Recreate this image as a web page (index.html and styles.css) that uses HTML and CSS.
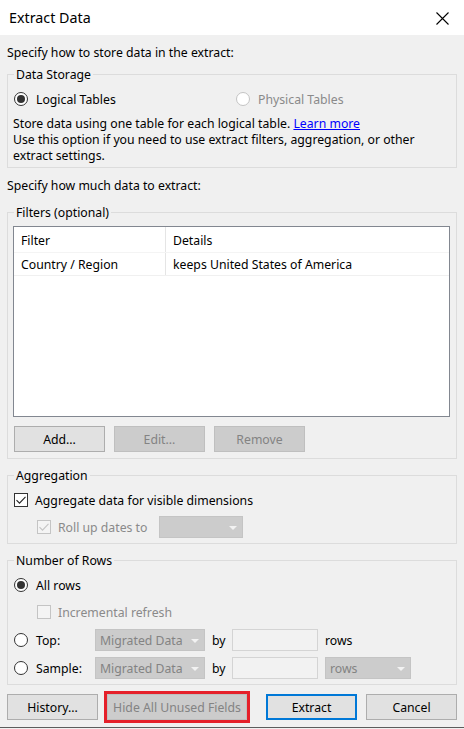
FILE: index.html
```html
<!DOCTYPE html>
<html>
<head>
<meta charset="utf-8">
<title>Extract Data</title>
<link rel="stylesheet" href="styles.css">
</head>
<body>
<div class="window">
  <div class="titlebar">
    <span class="title">Extract Data</span>
    <svg class="close" width="13" height="13" viewBox="0 0 13 13"><path d="M0.5 0.5L12.5 12.5M12.5 0.5L0.5 12.5" stroke="#000" stroke-width="1.1" fill="none"/></svg>
  </div>
  <div class="content">
    <p class="intro">Specify how to store data in the extract:</p>
    <fieldset class="group storage">
      <legend>Data Storage</legend>
      <div class="storage-row">
        <div class="opt"><span class="radio checked"></span><span class="lbl">Logical Tables</span></div>
        <div class="opt disabled"><span class="radio"></span><span class="lbl">Physical Tables</span></div>
      </div>
      <p class="desc">Store data using one table for each logical table. <a class="link">Learn more</a><br>Use this option if you need to use extract filters, aggregation, or other<br>extract settings.</p>
    </fieldset>

    <p class="intro second">Specify how much data to extract:</p>
    <fieldset class="group filters">
      <legend>Filters (optional)</legend>
      <div class="table">
        <div class="trow head">
          <div class="cell c1">Filter</div>
          <div class="cell c2">Details</div>
        </div>
        <div class="trow data">
          <div class="cell c1">Country / Region</div>
          <div class="cell c2">keeps United States of America</div>
        </div>
      </div>
      <div class="btn-row">
        <button class="btn">Add...</button>
        <button class="btn disabled">Edit...</button>
        <button class="btn disabled">Remove</button>
      </div>
    </fieldset>

    <fieldset class="group aggregation">
      <legend>Aggregation</legend>
      <div class="opt agg-row">
        <span class="check"><svg width="12" height="12" viewBox="0 0 12 12"><path d="M1.5 6.2L4.5 9.2L10.5 2.8" stroke="#222" stroke-width="1.1" fill="none"/></svg></span>
        <span class="lbl">Aggregate data for visible dimensions</span>
      </div>
      <div class="rollup-row">
        <div class="opt disabled">
          <span class="check dis"><svg width="12" height="12" viewBox="0 0 12 12"><path d="M1.5 6.2L4.5 9.2L10.5 2.8" stroke="#c4c4c4" stroke-width="1.1" fill="none"/></svg></span>
          <span class="lbl">Roll up dates to</span>
        </div>
        <div class="combo rollup-combo"></div>
      </div>
    </fieldset>

    <fieldset class="group rows">
      <legend>Number of Rows</legend>
      <div class="opt all-row"><span class="radio checked"></span><span class="lbl">All rows</span></div>
      <div class="opt disabled incr-row"><span class="check dis"></span><span class="lbl">Incremental refresh</span></div>
      <div class="limit-row top-row">
        <div class="opt"><span class="radio"></span><span class="lbl">Top:</span></div>
        <div class="combo">Migrated Data</div>
        <span class="by">by</span>
        <div class="textbox"></div>
        <span class="unit">rows</span>
      </div>
      <div class="limit-row sample-row">
        <div class="opt"><span class="radio"></span><span class="lbl">Sample:</span></div>
        <div class="combo">Migrated Data</div>
        <span class="by">by</span>
        <div class="textbox"></div>
        <div class="unit-wrap"><div class="combo unit-combo">rows</div></div>
      </div>
    </fieldset>

    <div class="footer">
      <button class="btn history">History...</button>
      <button class="btn disabled hide-btn">Hide All Unused Fields</button>
      <button class="btn default extract">Extract</button>
      <button class="btn cancel">Cancel</button>
    </div>
    <div class="edge"></div>
  </div>
</div>
</body>
</html>
```

FILE: styles.css
```css
* { box-sizing: border-box; }
html, body { margin: 0; padding: 0; }
body {
  font-family: "Noto Sans", "Segoe UI", sans-serif;
  font-size: 12.25px;
  line-height: 16px;
  color: #000;
  background: #f0f0f0;
  width: 464px;
  height: 729px;
  overflow: hidden;
}
.window { width: 464px; height: 729px; background: #f0f0f0; }

.titlebar {
  height: 35px;
  background: #fff;
  display: flex;
  align-items: flex-start;
  justify-content: space-between;
  padding: 0 15px 0 9px;
}
.title { font-size: 14.3px; line-height: 20px; margin-top: 8px; }
.close { display: block; margin-top: 12px; }

.content { padding: 0 7px; }

.intro { margin: 9px 0 0 0; height: 16px; padding-top: 1px; white-space: nowrap; }

.group {
  margin: 6px 0 0 0;
  padding: 0 6px 0 5px;
  border: 1px solid #dcdcdc;
  min-width: 0;
}
.group legend {
  padding: 1px 2px 0 2px;
  margin-left: 1px;
  line-height: 16px;
  height: 16px;
  white-space: nowrap;
}

.opt { display: flex; align-items: center; height: 16px; white-space: nowrap; }
.opt.disabled { color: #8a8a8a; }
.lbl { padding-top: 2px; line-height: 16px; }

.radio {
  width: 14px; height: 14px;
  border: 1px solid #333;
  border-radius: 50%;
  background: #fff;
  margin: 0 8px 0 1px;
  position: relative;
  flex: none;
}
.radio.checked::after {
  content: "";
  position: absolute;
  left: 2px; top: 2px;
  width: 8px; height: 8px;
  border-radius: 50%;
  background: #333;
}
.opt.disabled .radio { border-color: #c4c4c4; }

.check {
  width: 14px; height: 14px;
  border: 1px solid #333;
  background: #fff;
  margin: 0 7px 0 1px;
  flex: none;
  display: flex;
  align-items: center;
  justify-content: center;
}
.check.dis { border-color: #c4c4c4; background: #f4f4f4; }
.check svg { display: block; }

/* storage */
.storage { padding-bottom: 3px; }
.storage-row {
  display: grid;
  grid-template-columns: 222px auto;
  margin-top: 9px;
}
.desc { margin: 8px 0 0 0; padding-top: 1px; white-space: nowrap; }
.link { color: #0000ff; text-decoration: underline; }

/* filters */
.filters { margin-top: 11px; padding-bottom: 6px; }
.table {
  margin-top: 6px;
  height: 191px;
  border: 1px solid #828790;
  background: #fff;
}
.trow { display: flex; }
.trow.head { height: 26px; border-bottom: 1px solid #f4f4f4; }
.trow.data { height: 23px; border-bottom: 1px solid #f0f0f0; }
.cell { display: flex; align-items: center; padding: 2px 0 0 7px; white-space: nowrap; }
.cell.c1 { width: 152px; border-right: 1px solid #e5e5e5; }
.trow.head .cell { padding-top: 3px; }

.btn-row { display: flex; gap: 9px; margin: 9px 0 0 1px; }

.btn {
  font-family: inherit;
  font-size: 12.25px;
  color: #000;
  height: 26px;
  width: 91px;
  border: 1px solid #adadad;
  background: #e1e1e1;
  padding: 2px 0 0 0;
  margin: 0;
  line-height: 16px;
  white-space: nowrap;
}
.btn.disabled {
  background: #cccccc;
  border-color: #bfbfbf;
  color: #838383;
}
.btn.default { border: 2px solid #0078d7; }

/* aggregation */
.aggregation { margin-top: 8px; padding-bottom: 5px; }
.agg-row { margin-top: 9px; }
.rollup-row {
  display: grid;
  grid-template-columns: 123px 84px;
  align-items: center;
  margin: 8px 0 0 23px;
  height: 22px;
}
.combo {
  height: 22px;
  background: #cccccc;
  border: 1px solid #c4c4c4;
  color: #838383;
  padding: 2px 0 0 4px;
  display: flex;
  align-items: center;
  position: relative;
  white-space: nowrap;
}
.combo::after {
  content: "";
  position: absolute;
  right: 5px;
  top: 9px;
  border-left: 4px solid transparent;
  border-right: 4px solid transparent;
  border-top: 4px solid #f2f2f2;
}

/* rows */
.rows { margin-top: 8px; padding-bottom: 5px; }
.all-row { margin-top: 9px; }
.incr-row { margin: 11px 0 0 23px; }
.limit-row {
  display: grid;
  grid-template-columns: 82px 110px 27px 86px auto;
  align-items: center;
  height: 22px;
}
.top-row { margin-top: 9px; }
.sample-row { margin-top: 6px; }
.by, .unit { padding: 2px 0 0 7px; }
.unit-wrap { padding-left: 7px; }
.textbox {
  height: 22px;
  border: 1px solid #d4d4d4;
  background: #f2f2f2;
}
.unit-combo { width: 86px; }

/* footer */
.footer { display: flex; margin-top: 9px; }
.hide-btn {
  width: 140px;
  margin-left: 9px;
  outline: 3px solid #e5202a;
  outline-offset: 0;
}
.extract { margin-left: 19px; }
.cancel { margin-left: 9px; }

.edge {
  margin: 7px -7px 0 -7px;
  height: 1px;
  background: #5c5c5c;
}
```
